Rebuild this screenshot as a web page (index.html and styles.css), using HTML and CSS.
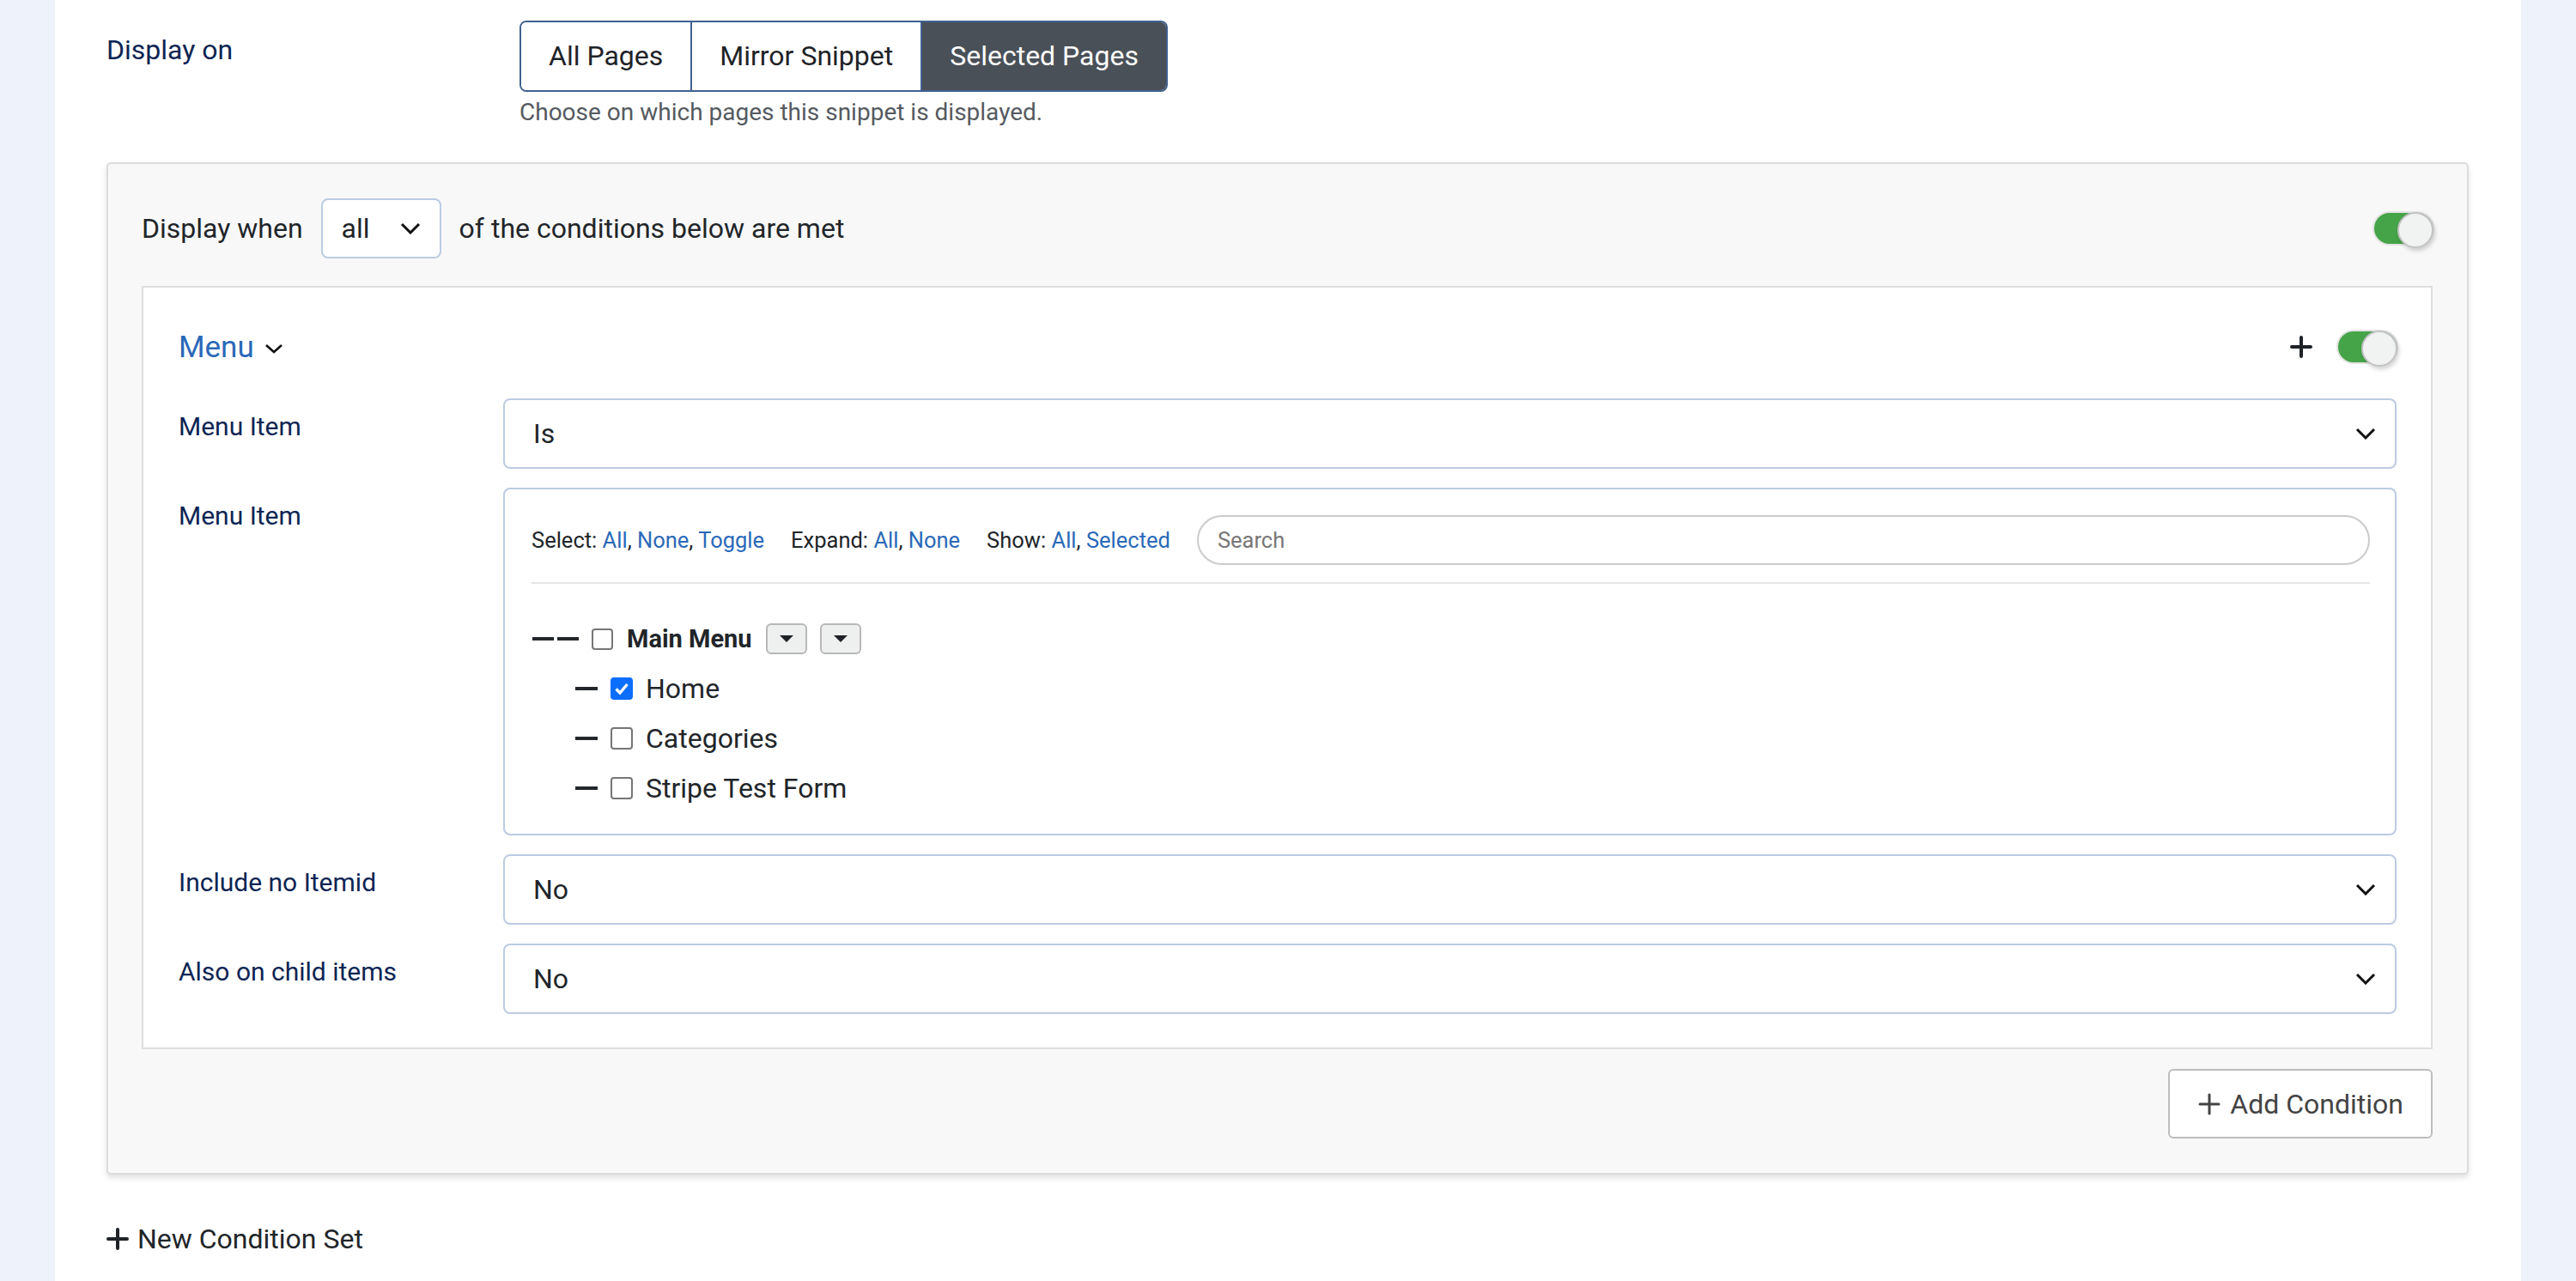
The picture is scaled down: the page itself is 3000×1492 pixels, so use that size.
FILE: index.html
```html
<!DOCTYPE html>
<html lang="en">
<head>
<meta charset="utf-8">
<title>Snippet display conditions</title>
<link rel="stylesheet" href="styles.css">
</head>
<body>
<main class="page">
  <div class="field-row">
    <div class="field-label top-label">Display on</div>
    <div class="field-control">
      <div class="btn-group">
        <button class="seg">All Pages</button>
        <button class="seg">Mirror Snippet</button>
        <button class="seg active">Selected Pages</button>
      </div>
      <div class="help">Choose on which pages this snippet is displayed.</div>
    </div>
  </div>

  <section class="condition-set">
    <div class="set-header">
      <span class="set-text">Display when</span>
      <div class="mini-select">
        <span>all</span>
        <svg class="chev" viewBox="0 0 24 14" width="24" height="14"><path d="M2 2 L12 12 L22 2" fill="none" stroke="#111" stroke-width="3"/></svg>
      </div>
      <span class="set-text">of the conditions below are met</span>
      <span class="toggle"></span>
    </div>

    <div class="condition-card">
      <div class="card-header">
        <a class="cond-title" href="#">Menu
          <svg class="chev-sm" viewBox="0 0 22 12" width="22" height="12"><path d="M2 2 L11 10 L20 2" fill="none" stroke="#111" stroke-width="2.6"/></svg>
        </a>
        <div class="card-actions">
          <svg class="plus" viewBox="0 0 26 26" width="26" height="26"><path d="M13 2v22M2 13h22" stroke="#1f2328" stroke-width="4" stroke-linecap="round"/></svg>
          <span class="toggle"></span>
        </div>
      </div>

      <div class="form-grid">
        <div class="form-label">Menu Item</div>
        <div class="select">
          <span>Is</span>
          <svg class="chev" viewBox="0 0 24 14" width="24" height="14"><path d="M2 2 L12 12 L22 2" fill="none" stroke="#111" stroke-width="3"/></svg>
        </div>

        <div class="form-label">Menu Item</div>
        <div class="tree-box">
          <div class="toolbar">
            <span class="grp">Select: <a href="#">All</a>, <a href="#">None</a>, <a href="#">Toggle</a></span>
            <span class="grp">Expand: <a href="#">All</a>, <a href="#">None</a></span>
            <span class="grp">Show: <a href="#">All</a>, <a href="#">Selected</a></span>
            <div class="search">Search</div>
          </div>
          <div class="separator"></div>
          <div class="tree">
            <div class="tree-row root">
              <span class="dash"></span><span class="dash second"></span>
              <span class="cb"></span>
              <span class="tree-text">Main Menu</span>
              <span class="mini-btn"><span class="caret"></span></span>
              <span class="mini-btn"><span class="caret"></span></span>
            </div>
            <div class="tree-row child">
              <span class="dash"></span>
              <span class="cb checked"><svg viewBox="0 0 26 26" width="26" height="26"><path d="M6.5 13.5l4.5 4.5L19.5 8" fill="none" stroke="#fff" stroke-width="3.4"/></svg></span>
              <span class="tree-text">Home</span>
            </div>
            <div class="tree-row child">
              <span class="dash"></span>
              <span class="cb"></span>
              <span class="tree-text">Categories</span>
            </div>
            <div class="tree-row child">
              <span class="dash"></span>
              <span class="cb"></span>
              <span class="tree-text">Stripe Test Form</span>
            </div>
          </div>
        </div>

        <div class="form-label">Include no Itemid</div>
        <div class="select">
          <span>No</span>
          <svg class="chev" viewBox="0 0 24 14" width="24" height="14"><path d="M2 2 L12 12 L22 2" fill="none" stroke="#111" stroke-width="3"/></svg>
        </div>

        <div class="form-label">Also on child items</div>
        <div class="select">
          <span>No</span>
          <svg class="chev" viewBox="0 0 24 14" width="24" height="14"><path d="M2 2 L12 12 L22 2" fill="none" stroke="#111" stroke-width="3"/></svg>
        </div>
      </div>
    </div>

    <div class="set-footer">
      <button class="add-btn">
        <svg class="plus" viewBox="0 0 26 26" width="26" height="26"><path d="M13 2v22M2 13h22" stroke="#444" stroke-width="3" stroke-linecap="round"/></svg>
        <span>Add Condition</span>
      </button>
    </div>
  </section>

  <div class="new-set">
    <svg class="plus" viewBox="0 0 26 26" width="26" height="26"><path d="M13 2v22M2 13h22" stroke="#1f2328" stroke-width="4" stroke-linecap="round"/></svg>
    <span>New Condition Set</span>
  </div>
</main>
</body>
</html>
```

FILE: styles.css
```css
* { box-sizing: border-box; }

html, body { margin: 0; }

body {
  background: #edf2fb;
  font-family: Roboto, "Noto Sans", "Liberation Sans", sans-serif;
  color: #22262a;
}

.page {
  margin: 0 64px;
  background: #fff;
  min-height: 1492px;
  padding: 24px 61px 40px 60px;
}

/* Display on row */
.field-row { display: flex; }

.field-label {
  width: 481px;
  flex: none;
  font-size: 32px;
  line-height: 46px;
  color: #0d2553;
  padding-top: 11px;
}

.btn-group {
  display: inline-flex;
  border: 2px solid #40618f;
  border-radius: 8px;
  overflow: hidden;
}

.seg {
  font-family: inherit;
  font-size: 32px;
  height: 79px;
  line-height: 79px;
  padding: 0 32px;
  border: 0;
  background: #fff;
  color: #1f2328;
}

.seg + .seg { border-left: 2px solid #40618f; }

.seg.active {
  background: #4a5058;
  color: #fff;
  border-left-color: #40618f;
}

.help {
  margin-top: 4px;
  font-size: 28px;
  line-height: 40px;
  color: #555a60;
}

/* Condition set panel */
.condition-set {
  margin-top: 38px;
  border: 2px solid #dcdcdc;
  border-radius: 5px;
  background: #f8f8f8;
  padding: 40px 40px 40px 39px;
  box-shadow: 0 4px 6px rgba(0, 0, 0, 0.12);
}

.set-header {
  display: flex;
  align-items: center;
  height: 70px;
  font-size: 32px;
  color: #212529;
}

.mini-select {
  width: 140px;
  height: 70px;
  margin: 0 21px 0 21px;
  border: 2px solid #bccbe2;
  border-radius: 8px;
  background: #fff;
  display: flex;
  align-items: center;
  justify-content: space-between;
  padding: 0 22px;
}

.toggle {
  position: relative;
  flex: none;
  width: 68px;
  height: 36px;
  border-radius: 18px;
  background: #45a447;
  box-shadow: 0 0 0 2px #e3e3e3;
}

.toggle::after {
  content: "";
  position: absolute;
  right: -1px;
  top: -1px;
  width: 38px;
  height: 38px;
  border-radius: 50%;
  background: #f1f3f3;
  border: 2px solid #c3c3c3;
  box-shadow: 2px 3px 5px rgba(0, 0, 0, 0.18);
}

.set-header .toggle { margin-left: auto; }

/* Condition card */
.condition-card {
  margin-top: 32px;
  border: 2px solid #dedede;
  background: #fff;
  padding: 40px 40px 39px 41px;
}

.card-header {
  display: flex;
  align-items: center;
  justify-content: space-between;
  height: 58px;
  margin-bottom: 31px;
}

.cond-title {
  display: flex;
  align-items: center;
  gap: 12px;
  color: #2a69b8;
  font-size: 35px;
  text-decoration: none;
}

.chev-sm { margin-top: 3px; }

.card-actions {
  display: flex;
  align-items: center;
  gap: 30px;
}

.form-grid {
  display: grid;
  grid-template-columns: 378px 1fr;
  row-gap: 22px;
}

.form-label {
  font-size: 30px;
  line-height: 46px;
  color: #0d2553;
  padding-top: 10px;
}

.select {
  height: 82px;
  border: 2px solid #bccbe2;
  border-radius: 8px;
  display: flex;
  align-items: center;
  justify-content: space-between;
  padding: 0 22px 0 33px;
  font-size: 32px;
  background: #fff;
  color: #212529;
}

/* Tree box */
.tree-box {
  border: 2px solid #bccbe2;
  border-radius: 8px;
  padding: 30px 29px 24px 31px;
}

.toolbar {
  display: flex;
  align-items: center;
  gap: 31px;
  height: 58px;
  font-size: 25.5px;
  color: #212529;
}

.grp { white-space: nowrap; }

.toolbar a {
  color: #2a69b8;
  text-decoration: none;
}

.search {
  flex: 1;
  height: 58px;
  border: 2px solid #cbcbcb;
  border-radius: 29px;
  padding-left: 22px;
  display: flex;
  align-items: center;
  color: #777;
  font-size: 25.5px;
}

.separator {
  margin-top: 20px;
  height: 2px;
  background: #e6e6e6;
}

.tree { margin-top: 35px; }

.tree-row {
  display: flex;
  align-items: center;
  height: 58px;
  font-size: 32px;
  color: #212529;
}

.tree-row.root {
  font-size: 29px;
  font-weight: 700;
  padding-left: 1px;
}

.tree-row.child { padding-left: 51px; }

.dash {
  width: 25px;
  height: 4px;
  background: #23272b;
  margin-right: 15px;
}

.root .dash { margin-right: 4px; }
.root .dash.second { margin-right: 15px; }
.child .dash { width: 26px; }

.cb {
  width: 25px;
  height: 25px;
  flex: none;
  border: 2px solid #767676;
  border-radius: 4px;
  background: #fff;
  margin-right: 16px;
  display: flex;
  align-items: center;
  justify-content: center;
}

.child .cb { width: 26px; height: 26px; margin-right: 15px; }

.cb.checked {
  background: #0b6efd;
  border-color: #0b6efd;
}

.cb.checked svg { flex: none; }

.tree-text { margin-right: 16px; }

.mini-btn {
  width: 48px;
  height: 36px;
  border: 2px solid #b8b8b8;
  border-radius: 6px;
  background: #eeefef;
  display: flex;
  align-items: center;
  justify-content: center;
  margin-right: 15px;
}

.caret {
  width: 0;
  height: 0;
  border-left: 8px solid transparent;
  border-right: 8px solid transparent;
  border-top: 8px solid #1f2328;
}

/* Footer */
.set-footer {
  display: flex;
  justify-content: flex-end;
  margin-top: 23px;
}

.add-btn {
  height: 81px;
  padding: 0 32px 0 33px;
  border: 2px solid #bdbdbd;
  border-radius: 6px;
  background: #fff;
  font-family: inherit;
  font-size: 32px;
  color: #444;
  display: flex;
  align-items: center;
  gap: 11px;
}

.new-set {
  margin-top: 52px;
  display: flex;
  align-items: center;
  gap: 10px;
  font-size: 32px;
  line-height: 46px;
  color: #212529;
}
```
